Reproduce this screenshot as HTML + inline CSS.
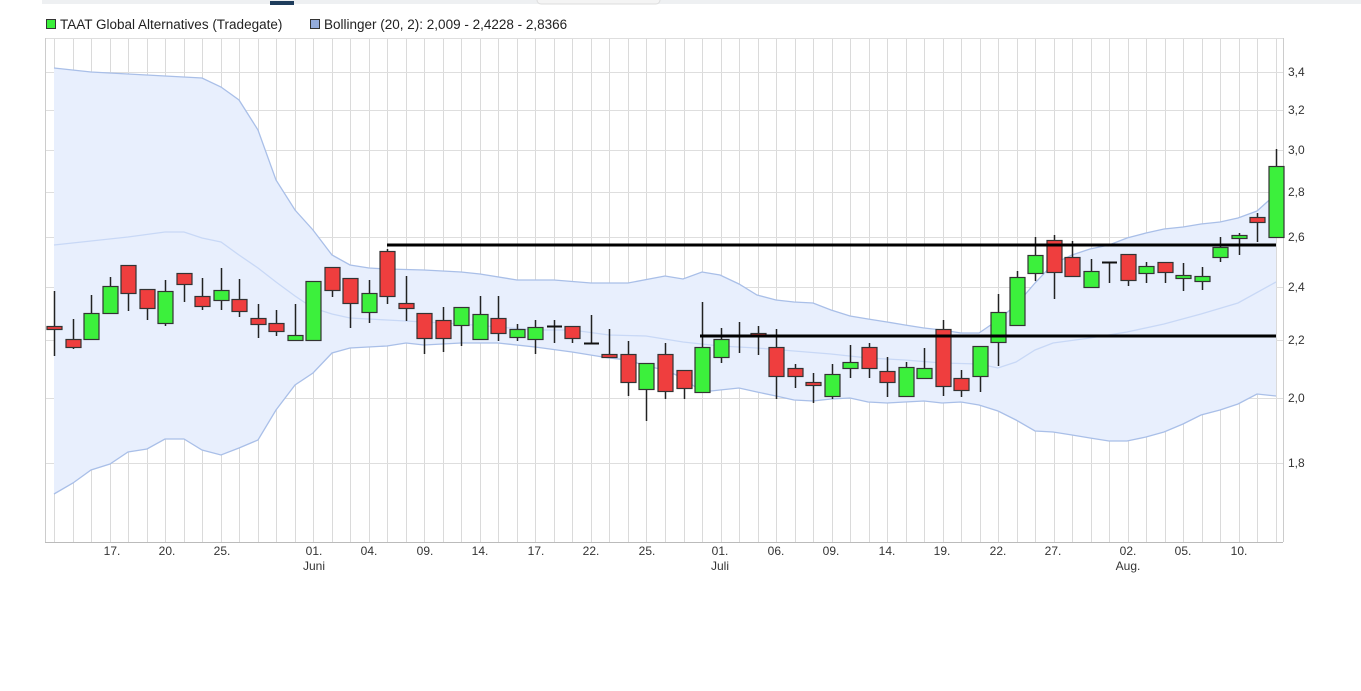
<!DOCTYPE html>
<html><head><meta charset="utf-8"><style>
html,body{margin:0;padding:0;background:#fff;width:1361px;height:691px;overflow:hidden;font-family:"Liberation Sans",Arial,sans-serif}
svg text{font-family:"Liberation Sans",Arial,sans-serif;font-size:12px;fill:#333}
svg text.lg{font-size:13.5px;fill:#222}
</style></head><body>
<svg id="s" width="1361" height="691" xmlns="http://www.w3.org/2000/svg">
<rect x="42" y="0" width="1319" height="4" fill="#eef0f2"/>
<rect x="270" y="1" width="24" height="4" fill="#1f3d5c"/>
<rect x="537" y="-6" width="123" height="10" rx="4" fill="#f4f4f4" stroke="#ddd"/>
<rect x="46.5" y="19.5" width="9" height="9" fill="#3bef3b" stroke="#333"/>
<text class="lg" x="60" y="29">TAAT Global Alternatives (Tradegate)</text>
<rect x="310.5" y="19.5" width="9" height="9" fill="#94acdc" stroke="#333"/>
<text class="lg" x="324" y="29">Bollinger (20, 2): 2,009 - 2,4228 - 2,8366</text>
<g id="grid"></g>
<g id="band"></g>
<g id="cand"></g>
<line x1="387" y1="245" x2="1276" y2="245" stroke="#000" stroke-width="3"/>
<line x1="700" y1="336" x2="1276" y2="336" stroke="#000" stroke-width="3"/>
<g text-anchor="start">
<text x="1288" y="76">3,4</text><text x="1288" y="114">3,2</text><text x="1288" y="154">3,0</text>
<text x="1288" y="196">2,8</text><text x="1288" y="241">2,6</text><text x="1288" y="291">2,4</text>
<text x="1288" y="344">2,2</text><text x="1288" y="402">2,0</text><text x="1288" y="467">1,8</text>
</g>
<g text-anchor="middle">
<text x="112" y="555">17.</text><text x="167" y="555">20.</text><text x="222" y="555">25.</text>
<text x="314" y="555">01.</text><text x="314" y="570">Juni</text>
<text x="369" y="555">04.</text><text x="425" y="555">09.</text><text x="480" y="555">14.</text>
<text x="536" y="555">17.</text><text x="591" y="555">22.</text><text x="647" y="555">25.</text>
<text x="720" y="555">01.</text><text x="720" y="570">Juli</text>
<text x="776" y="555">06.</text><text x="831" y="555">09.</text><text x="887" y="555">14.</text>
<text x="942" y="555">19.</text><text x="998" y="555">22.</text><text x="1053" y="555">27.</text>
<text x="1128" y="555">02.</text><text x="1128" y="570">Aug.</text>
<text x="1183" y="555">05.</text><text x="1239" y="555">10.</text>
</g>
</svg>
<script>
var NS="http://www.w3.org/2000/svg";
function el(p,t,a){var e=document.createElementNS(NS,t);for(var k in a)e.setAttribute(k,a[k]);p.appendChild(e);return e;}
var g=document.getElementById("grid");
var X0=54,ST=18.515;
for(var i=0;i<67;i++){var x=Math.round(X0+i*ST)+0.5;el(g,"line",{x1:x,y1:38,x2:x,y2:542,stroke:"#dadada"});}
[38,72,110,150,192,237,287,340,398,463].forEach(function(y){el(g,"line",{x1:45,y1:y+.5,x2:1283,y2:y+.5,stroke:"#dedede"});});
el(g,"line",{x1:45.5,y1:38,x2:45.5,y2:542,stroke:"#ccc"});
el(g,"line",{x1:1283.5,y1:38,x2:1283.5,y2:542,stroke:"#ccc"});
el(g,"line",{x1:45,y1:542.5,x2:1283,y2:542.5,stroke:"#bbb"});
var up=[[54,68],[91,72],[128,74],[165,76],[202,78],[221,87],[239,100],[258,130],[276,180],[295,210],[313,230],[332,255],[350,265],[369,268],[387,269],[424,270],[461,272],[480,274],[517,280],[554,280],[591,283],[628,283],[665,276],[683,279],[702,272],[720,275],[739,284],[757,295],[776,300],[794,302],[813,303],[831,310],[850,316],[868,319],[887,322],[905,325],[924,328],[942,330],[961,333],[979,333],[998,320],[1016,305],[1035,283],[1053,264],[1072,255],[1090,249],[1109,245],[1127,238],[1146,233],[1164,229],[1183,227],[1201,224],[1220,222],[1238,218],[1257,211],[1276,194]];
var lo=[[54,494],[73,483],[91,470],[110,464],[128,452],[147,449],[165,439],[184,439],[202,450],[221,455],[239,448],[258,440],[276,410],[295,385],[313,373],[332,353],[350,348],[387,346],[406,343],[424,345],[461,343],[498,343],[535,347],[572,352],[609,358],[628,360],[646,366],[665,370],[683,378],[702,392],[720,390],[739,388],[757,392],[776,396],[794,400],[813,401],[831,399],[850,398],[868,402],[887,403],[905,402],[924,401],[942,403],[961,402],[979,405],[998,411],[1016,420],[1035,431],[1053,432],[1072,435],[1090,438],[1109,441],[1127,441],[1146,437],[1164,432],[1183,424],[1201,415],[1220,410],[1238,404],[1257,394],[1276,396]];
var mid=[[54,245],[91,241],[128,237],[165,232],[184,232],[202,238],[221,242],[239,255],[258,268],[276,282],[295,296],[313,308],[332,314],[350,318],[387,320],[424,322],[461,324],[498,327],[535,330],[572,330],[609,335],[646,336],[683,342],[720,346],[757,348],[794,351],[831,354],[868,358],[905,360],[942,363],[979,364],[998,368],[1016,362],[1035,350],[1053,343],[1090,338],[1127,332],[1164,324],[1201,314],[1238,303],[1276,282]];
function pts(a){return a.map(function(p){return p[0]+","+p[1]}).join(" ");}
var b=document.getElementById("band");
el(b,"polygon",{points:pts(up)+" "+pts(lo.slice().reverse()),fill:"#e8effd"});
el(b,"polyline",{points:pts(up),fill:"none",stroke:"#a9bfe8","stroke-width":1.3});
el(b,"polyline",{points:pts(lo),fill:"none",stroke:"#a9bfe8","stroke-width":1.3});
el(b,"polyline",{points:pts(mid),fill:"none",stroke:"#c8d8f6","stroke-width":1.3});
var C=[[326,329,291,356,"r"],[339,347,319,349,"r"],[313,339,295,340,"g"],[286,313,277,313,"g"],[265,293,265,311,"r"],[289,308,289,320,"r"],[291,323,280,326,"g"],[273,284,273,302,"r"],[296,306,278,310,"r"],[290,300,268,310,"g"],[299,311,279,317,"r"],[318,324,304,338,"r"],[323,331,310,336,"r"],[335,340,304,340,"g"],[281,340,281,340,"g"],[267,290,267,297,"r"],[278,303,278,328,"r"],[293,312,280,323,"g"],[251,296,249,304,"r"],[303,308,276,321,"r"],[313,338,313,354,"r"],[320,338,307,352,"r"],[307,325,307,346,"g"],[314,339,296,339,"g"],[318,333,296,341,"r"],[329,337,324,341,"g"],[327,339,320,354,"g"],[326,326,320,343,"d"],[326,338,326,343,"r"],[343,343,315,343,"d"],[354,357,329,357,"r"],[354,382,341,396,"r"],[363,389,363,421,"g"],[354,391,343,399,"r"],[370,388,370,399,"r"],[347,392,302,392,"g"],[339,357,328,363,"g"],[335,335,322,353,"d"],[333,335,326,355,"r"],[347,376,329,399,"r"],[368,376,364,388,"r"],[382,385,373,403,"r"],[374,396,364,399,"g"],[362,368,345,378,"g"],[347,368,343,378,"r"],[371,382,357,397,"r"],[367,396,362,396,"g"],[368,378,348,378,"g"],[329,386,320,396,"r"],[378,390,370,397,"r"],[346,376,346,392,"g"],[312,342,294,366,"g"],[277,325,271,325,"g"],[255,273,237,281,"g"],[240,272,235,299,"r"],[257,276,241,276,"r"],[271,287,259,287,"g"],[262,262,262,283,"d"],[254,280,254,286,"r"],[266,273,262,283,"g"],[262,272,262,283,"r"],[275,278,263,291,"g"],[276,281,267,290,"g"],[247,257,237,262,"g"],[235,237,233,255,"g"],[217,222,213,242,"r"],[166,237,149,237,"g"]];
var cg=document.getElementById("cand");
C.forEach(function(c,i){var x=Math.round(X0+i*ST);
 el(cg,"line",{x1:x+.5,y1:c[2],x2:x+.5,y2:c[3],stroke:"#222","stroke-width":1.5});
 if(c[4]=="d"){el(cg,"line",{x1:x-7,y1:c[0]+.5,x2:x+8,y2:c[0]+.5,stroke:"#111","stroke-width":2});}
 else{var h=Math.max(c[1]-c[0],3);el(cg,"rect",{x:x-7,y:c[0]+.5,width:15,height:h,fill:c[4]=="g"?"#3cf03c":"#ef3e3e",stroke:"#333","stroke-width":1.2});}
});
</script>
</body></html>
